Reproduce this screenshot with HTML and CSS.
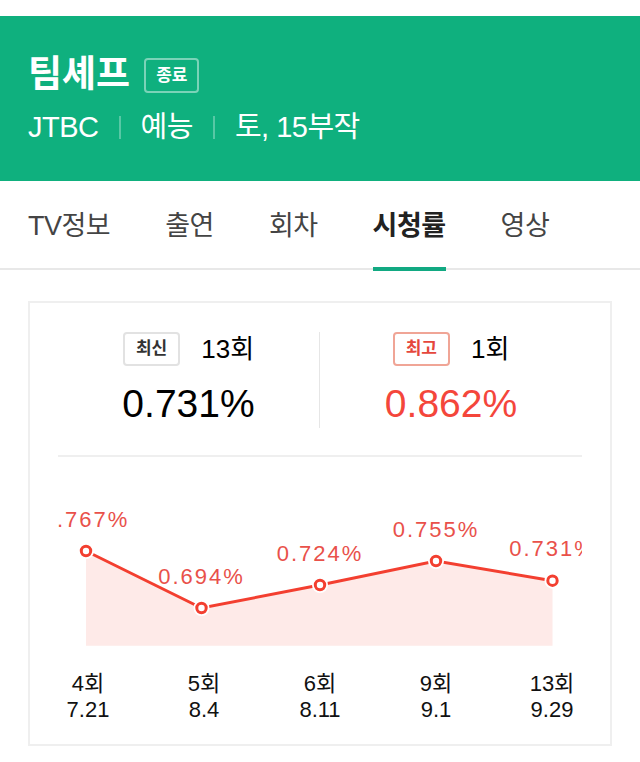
FILE: index.html
```html
<!DOCTYPE html>
<html lang="ko">
<head>
    <meta charset="UTF-8">
    <meta name="viewport" content="width=device-width, initial-scale=1.0">
    <title>팀셰프 시청률</title>
    <link rel="stylesheet" href="styles.css">
</head>
<body>

    <header class="program-head">
        <div class="title-row">
            <h1 class="title">팀셰프</h1>
            <span class="state-badge">종료</span>
        </div>
        <div class="meta-row">
            <span>JTBC</span>
            <span class="meta-sep"></span>
            <span>예능</span>
            <span class="meta-sep"></span>
            <span>토, 15부작</span>
        </div>
    </header>

    <nav class="tabs">
        <a class="tab">TV정보</a>
        <a class="tab">출연</a>
        <a class="tab">회차</a>
        <a class="tab active">시청률</a>
        <a class="tab">영상</a>
    </nav>

    <section class="rating-card">
        <div class="summary">
            <div class="summary-col">
                <div class="summary-top">
                    <span class="tag">최신</span>
                    <span class="episode">13회</span>
                </div>
                <div class="rate">0.731%</div>
            </div>
            <div class="summary-col">
                <div class="summary-top">
                    <span class="tag best">최고</span>
                    <span class="episode">1회</span>
                </div>
                <div class="rate best">0.862%</div>
            </div>
        </div>

        <div class="chart">
            <svg width="524" height="193" viewBox="0 0 524 193">
                <path class="area" d="M28,94 L143.5,151 L262,128 L378,104 L494.5,123.7 L494.5,188.7 L28,188.7 Z"/>
                <polyline class="line" points="28,94 143.5,151 262,128 378,104 494.5,123.7"/>
                <g class="halo">
                    <circle cx="28" cy="94" r="8"/>
                    <circle cx="143.5" cy="151" r="8"/>
                    <circle cx="262" cy="128" r="8"/>
                    <circle cx="378" cy="104" r="8"/>
                    <circle cx="494.5" cy="123.7" r="8"/>
                </g>
                <g class="dot">
                    <circle cx="28" cy="94" r="4.7"/>
                    <circle cx="143.5" cy="151" r="4.7"/>
                    <circle cx="262" cy="128" r="4.7"/>
                    <circle cx="378" cy="104" r="4.7"/>
                    <circle cx="494.5" cy="123.7" r="4.7"/>
                </g>
                <g class="value">
                    <text x="28" y="70">0.767%</text>
                    <text x="143.5" y="127">0.694%</text>
                    <text x="262" y="104">0.724%</text>
                    <text x="378" y="79.5">0.755%</text>
                    <text x="494.5" y="99">0.731%</text>
                </g>
            </svg>
        </div>

        <div class="axis">
            <div class="axis-item">4회<br>7.21</div>
            <div class="axis-item">5회<br>8.4</div>
            <div class="axis-item">6회<br>8.11</div>
            <div class="axis-item">9회<br>9.1</div>
            <div class="axis-item">13회<br>9.29</div>
        </div>
    </section>

</body>
</html>
```

FILE: styles.css
```css
body {
    margin: 0;
    font-family: "Liberation Sans", "Noto Sans CJK KR", sans-serif;
    color: #000;
    background: #fff;
}

.program-head {
    box-sizing: border-box;
    height: 165px;
    margin-top: 16px;
    padding: 37px 28px 0;
    background-color: #0fb07e;
    color: #fff;
}

.title-row {
    display: flex;
    align-items: center;
    height: 44px;
}

.title {
    margin: 0;
    font-size: 37px;
    line-height: 44px;
    font-weight: bold;
}

.state-badge {
    box-sizing: border-box;
    height: 35px;
    margin-left: 14px;
    padding: 0 10px;
    border: 2px solid rgba(255, 255, 255, 0.45);
    border-radius: 4px;
    font-size: 17px;
    line-height: 31px;
    font-weight: bold;
}

.meta-row {
    display: flex;
    align-items: center;
    margin-top: 12px;
    font-size: 29px;
    line-height: 36px;
    letter-spacing: -0.5px;
}

.meta-sep {
    width: 2px;
    height: 23px;
    margin: 0 20px;
    background: rgba(255, 255, 255, 0.3);
}

.tabs {
    display: flex;
    gap: 55px;
    height: 87px;
    padding: 0 28px;
    border-bottom: 2px solid #e8e8e8;
}

.tab {
    position: relative;
    font-size: 27px;
    line-height: 90px;
    height: 87px;
    letter-spacing: -0.5px;
    color: #444;
}

.tab.active {
    color: #222;
    font-weight: bold;
}

.tab.active::after {
    content: "";
    position: absolute;
    left: 0;
    right: 0;
    bottom: -3px;
    height: 4px;
    background: #12a982;
}

.rating-card {
    margin: 31px 28px 0;
    padding: 0 28px 21px;
    border: 2px solid #efefef;
}

.summary {
    display: grid;
    grid-template-columns: 1fr 1fr;
    padding: 29px 0 27px;
    border-bottom: 2px solid #efefef;
}

.summary-col {
    display: flex;
    flex-direction: column;
    align-items: center;
}

.summary-col:first-child {
    border-right: 1px solid #e6e6e6;
}

.summary-top {
    display: flex;
    align-items: center;
    gap: 21px;
    height: 34px;
}

.tag {
    box-sizing: border-box;
    height: 34px;
    padding: 0 11px;
    border: 2px solid #e2e2e2;
    border-radius: 4px;
    font-size: 17px;
    line-height: 30px;
    font-weight: bold;
    color: #333;
}

.tag.best {
    border-color: #f0a596;
    color: #e5473d;
}

.episode {
    font-size: 26px;
    line-height: 34px;
}

.rate {
    margin-top: 14px;
    font-size: 39px;
    line-height: 48px;
}

.rate.best {
    color: #f4463b;
}

.chart svg {
    display: block;
}

.area {
    fill: #feeae8;
}

.line {
    fill: none;
    stroke: #f33f30;
    stroke-width: 3;
}

.halo circle {
    fill: #fff;
}

.dot circle {
    fill: #fff;
    stroke: #f33f30;
    stroke-width: 3;
}

.value text {
    fill: #e9514a;
    font-family: "Liberation Sans", sans-serif;
    font-size: 22px;
    letter-spacing: 2px;
    text-anchor: middle;
}

.axis {
    display: grid;
    grid-template-columns: repeat(5, 1fr);
    margin: 21px -28px 0;
    font-size: 22px;
    line-height: 26px;
    text-align: center;
    color: #111;
}
```
